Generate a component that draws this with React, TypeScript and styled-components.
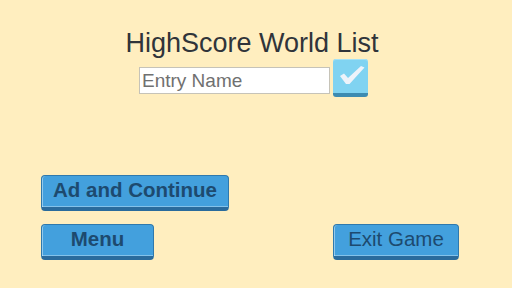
import React from 'react';
import styled, {createGlobalStyle} from 'styled-components';

const GlobalStyle = createGlobalStyle`
  html, body {
    margin: 0;
    padding: 0;
    background: #ffeebf;
  }
  body {
    font-family: "Liberation Sans", Arial, sans-serif;
  }
`;

const Page = styled.div`
  height: 288px;
  display: flex;
  flex-direction: column;
  box-sizing: border-box;
  padding-top: 27px;
  background: #ffeebf;
`;

const Header = styled.div`
  display: flex;
  flex-direction: column;
  align-items: center;
`;

const Title = styled.h1`
  margin: 0;
  font-size: 27px;
  line-height: 32px;
  font-weight: normal;
  color: #30343a;
  padding-right: 8px;
`;

const EntryRow = styled.div`
  display: flex;
  align-items: flex-start;
  gap: 3px;
  padding-right: 5px;
`;

const NameInput = styled.input`
  width: 191px;
  height: 27px;
  margin-top: 8px;
  box-sizing: border-box;
  border: 1px solid #c6c3b8;
  background: #ffffff;
  padding: 0 2px;
  font-family: "Liberation Sans", Arial, sans-serif;
  font-size: 19px;
  color: #333;
  outline: none;
  &::placeholder {
    color: #707070;
  }
`;

const ConfirmButton = styled.button`
  width: 35px;
  height: 38px;
  padding: 0;
  box-sizing: border-box;
  border: none;
  border-radius: 3px;
  background: #80d3f1;
  border-bottom: 4px solid #3d8bb1;
  box-shadow: inset 0 1px 0 #a5e2f7;
  display: flex;
  align-items: center;
  justify-content: center;
  cursor: pointer;
`;

const Footer = styled.div`
  margin-top: auto;
  display: flex;
  flex-direction: column;
  gap: 13px;
  padding: 0 53px 28px 41px;
`;

const ButtonRow = styled.div`
  display: flex;
  justify-content: space-between;
`;

const GameButton = styled.button<{$w: number; $bold?: boolean}>`
  width: ${p => p.$w}px;
  height: 36px;
  box-sizing: border-box;
  padding: 0 0 3px;
  border: 1px solid #2f79ad;
  border-bottom: 4px solid #2a6b9c;
  border-radius: 4px;
  background: #43a0dd;
  box-shadow: inset 1px 0 0 rgba(210, 235, 250, 0.55),
    inset 0 -1px 0 rgba(210, 235, 250, 0.45);
  color: #1d4a6f;
  font-family: "Liberation Sans", Arial, sans-serif;
  font-size: 20.5px;
  font-weight: ${p => (p.$bold ? 'bold' : 'normal')};
  cursor: pointer;
`;

const CheckIcon = () => (
  <svg width="35" height="34" viewBox="0 0 35 34">
    <polygon
      points="7,17 11,14.5 15,19 28,7 31.5,8.5 16.5,25 13,25"
      fill="#eef3fa"
    />
  </svg>
);

export default function App() {
  return (
    <>
      <GlobalStyle />
      <Page>
        <Header>
          <Title>HighScore World List</Title>
          <EntryRow>
            <NameInput placeholder="Entry Name" />
            <ConfirmButton>
              <CheckIcon />
            </ConfirmButton>
          </EntryRow>
        </Header>
        <Footer>
          <ButtonRow>
            <GameButton $w={188} $bold>
              Ad and Continue
            </GameButton>
          </ButtonRow>
          <ButtonRow>
            <GameButton $w={113} $bold>
              Menu
            </GameButton>
            <GameButton $w={126}>Exit Game</GameButton>
          </ButtonRow>
        </Footer>
      </Page>
    </>
  );
}
